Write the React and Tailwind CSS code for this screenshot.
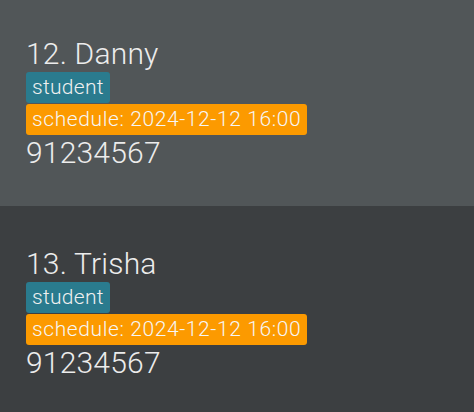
import React from 'react';

const people = [
  { id: 12, name: 'Danny', tags: ['student'], schedule: '2024-12-12 16:00', phone: '91234567' },
  { id: 13, name: 'Trisha', tags: ['student'], schedule: '2024-12-12 16:00', phone: '91234567' },
];

function PersonCard({ person, odd }) {
  return (
    <div
      className={`pl-[26px] ${
        odd ? 'bg-[#515658] pt-[36px] pb-[36px]' : 'bg-[#3c3f41] pt-[40px] pb-[36px]'
      }`}
    >
      <div className="text-[30px] leading-[35px] tracking-[0.2px] text-[#ececec]">
        {person.id}. {person.name}
      </div>
      <div className="mt-[1px] flex flex-col items-start gap-[1px]">
        {person.tags.map((tag) => (
          <span
            key={tag}
            className="rounded-[3px] bg-[#2a7b8e] px-[6px] pt-[3px] pb-[3px] text-[21px] leading-[25px] tracking-[0.3px] text-[#f0f0f0]"
          >
            {tag}
          </span>
        ))}
        <span className="rounded-[3px] bg-[#fc9a00] px-[6px] pt-[3px] pb-[3px] text-[21px] leading-[25px] tracking-[0.6px] text-[#f6f6f6]">
          schedule: {person.schedule}
        </span>
      </div>
      <div className="text-[30px] leading-[35px] tracking-[0.2px] text-[#ececec]">{person.phone}</div>
    </div>
  );
}

export default function App() {
  return (
    <div className="h-[412px] w-[474px] overflow-hidden bg-[#3c3f41] font-['Roboto',sans-serif] font-light">
      {people.map((p, i) => (
        <PersonCard key={p.id} person={p} odd={i === 0} />
      ))}
    </div>
  );
}
